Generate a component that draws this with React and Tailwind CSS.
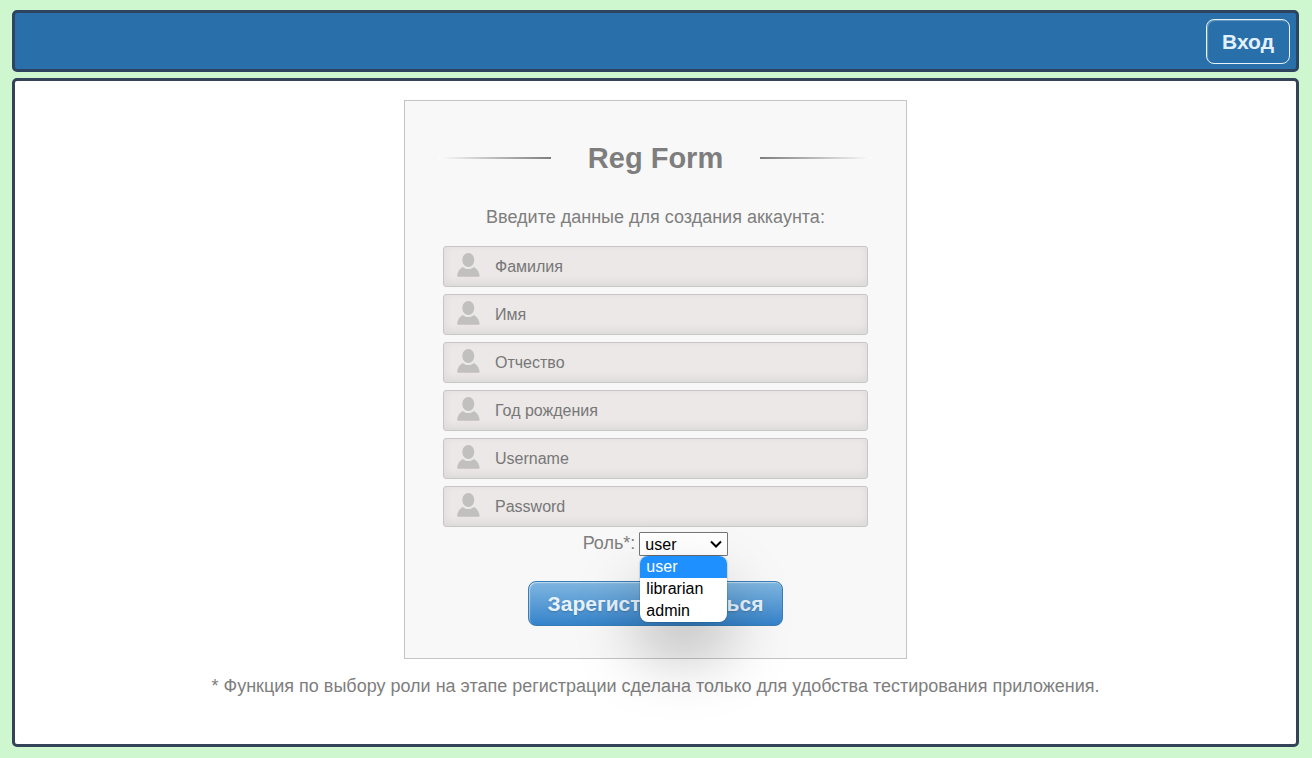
import { useState } from "react";

const fields = [
  { name: "surname", label: "Фамилия", type: "text" },
  { name: "firstname", label: "Имя", type: "text" },
  { name: "patronymic", label: "Отчество", type: "text" },
  { name: "birthyear", label: "Год рождения", type: "text" },
  { name: "username", label: "Username", type: "text" },
  { name: "password", label: "Password", type: "password" },
];

const roles = ["user", "librarian", "admin"];

function PersonIcon() {
  return (
    <svg
      className="pointer-events-none absolute top-[7px] left-3.5 h-6 w-6 fill-[#c2bfbf]"
      viewBox="0 0 24 24"
      aria-hidden="true"
    >
      <ellipse cx="11.3" cy="7" rx="6" ry="7" />
      <path d="M0.2 22.8C0.4 19.6 2 16.4 4.6 14.7C5.6 14.1 6.4 14.4 7.3 14.9C9.8 16.5 12.8 16.5 15.3 14.9C16.2 14.4 17 14.1 18 14.7C20.6 16.4 22.4 19.6 22.6 22.8Q22.6 23.7 21.6 23.7H1.2Q0.2 23.7 0.2 22.8Z" />
    </svg>
  );
}

function Field({ name, label, type }) {
  return (
    <label htmlFor={name} className="relative block">
      <PersonIcon />
      <input
        id={name}
        name={name}
        type={type}
        aria-label={label}
        placeholder={label}
        className="block h-[41px] w-full rounded-[3px] border border-[#c8c6c6] bg-[#ebe8e7] pr-2.5 pl-[51px] text-base text-[#777777] shadow-[inset_0_-3px_10px_rgba(0,0,0,0.07)] outline-none placeholder:text-[#777777]"
      />
    </label>
  );
}

function RoleSelect() {
  const [role, setRole] = useState("user");
  return (
    <div className="flex items-center justify-center gap-1">
      <label htmlFor="role" className="pb-0.5 text-lg leading-5">
        Роль*:
      </label>
      <div className="relative w-[89px]">
        <select
          id="role"
          value={role}
          onChange={(e) => setRole(e.target.value)}
          className="block h-6 w-full appearance-none rounded-[1px] border border-[#767676] bg-white pt-0.5 pl-[5px] text-base leading-5 text-black outline-none"
        >
          {roles.map((r) => (
            <option key={r}>{r}</option>
          ))}
        </select>
        <svg
          className="pointer-events-none absolute top-2 right-1.5 h-2 w-3 fill-none stroke-black stroke-2"
          viewBox="0 0 12 8"
          aria-hidden="true"
        >
          <path d="M1 1.5L6 6.5L11 1.5" />
        </svg>
        <ul
          role="listbox"
          aria-label="Роль"
          className="absolute inset-x-px top-full z-10 overflow-hidden rounded-lg bg-white text-left text-base leading-[22px] text-black shadow-[0_0_1px_1px_rgba(0,0,0,0.12),0_32px_64px_rgba(0,0,0,0.27)]"
        >
          {roles.map((r) => (
            <li
              key={r}
              role="option"
              aria-selected={r === role}
              onClick={() => setRole(r)}
              className="px-1.5 aria-selected:bg-[#1e90ff] aria-selected:text-white"
            >
              {r}
            </li>
          ))}
        </ul>
      </div>
    </div>
  );
}

export default function App() {
  return (
    <div className="flex min-h-screen flex-col gap-1.5 bg-[#cff7cf] pt-2.5 pr-[13px] pb-[11px] pl-3 font-['Liberation_Sans',Arial,sans-serif] text-[#7e7e7e]">
      <header className="flex justify-end rounded-[5px] border-3 border-[#2e4360] bg-[#2970ab] px-1.5 py-[5px]">
        <button
          type="button"
          className="mt-px h-[45px] rounded-lg border border-[#e8f2fa] px-[15px] text-[21px] font-bold text-[#e3f1ff] shadow-[inset_1px_1px_1px_rgba(255,255,255,0.3)]"
        >
          Вход
        </button>
      </header>

      <main className="flex grow flex-col items-center rounded-[5px] border-3 border-[#34425a] bg-white px-4 pt-[19px] pb-10">
        <form
          onSubmit={(e) => e.preventDefault()}
          className="w-full max-w-[503px] border border-[#c4c4c4] bg-[#f8f8f8] px-[38px] pt-10 pb-8 text-center"
        >
          <h1 className="-mx-[5px] flex items-center justify-between text-[29px] leading-[34px] font-bold">
            <span className="h-0.5 w-[26%] bg-linear-to-l from-[#7e7e7e] to-[#fdfdfd]" />
            Reg Form
            <span className="h-0.5 w-[26%] bg-linear-to-r from-[#7e7e7e] to-[#fdfdfd]" />
          </h1>
          <p className="mt-[30px] text-lg leading-6">Введите данные для создания аккаунта:</p>
          <div className="mt-[17px] mb-[5px] flex flex-col gap-[7px] text-left">
            {fields.map((f) => (
              <Field key={f.name} {...f} />
            ))}
          </div>
          <RoleSelect />
          <button
            type="submit"
            className="mt-[25px] h-[45px] rounded-lg border border-[#3a7db5] bg-linear-to-b from-[#7fb6e0] to-[#3483ca] px-[19px] text-[21px] font-bold text-[#e6f3ff] shadow-[inset_1px_1px_1px_rgba(255,255,255,0.5)] text-shadow-[0_1px_2px_rgba(0,0,0,0.2)]"
          >
            Зарегистрироваться
          </button>
        </form>
        <p className="mt-[15px] text-center text-lg leading-6">
          * Функция по выбору роли на этапе регистрации сделана только для удобства тестирования приложения.
        </p>
      </main>
    </div>
  );
}
